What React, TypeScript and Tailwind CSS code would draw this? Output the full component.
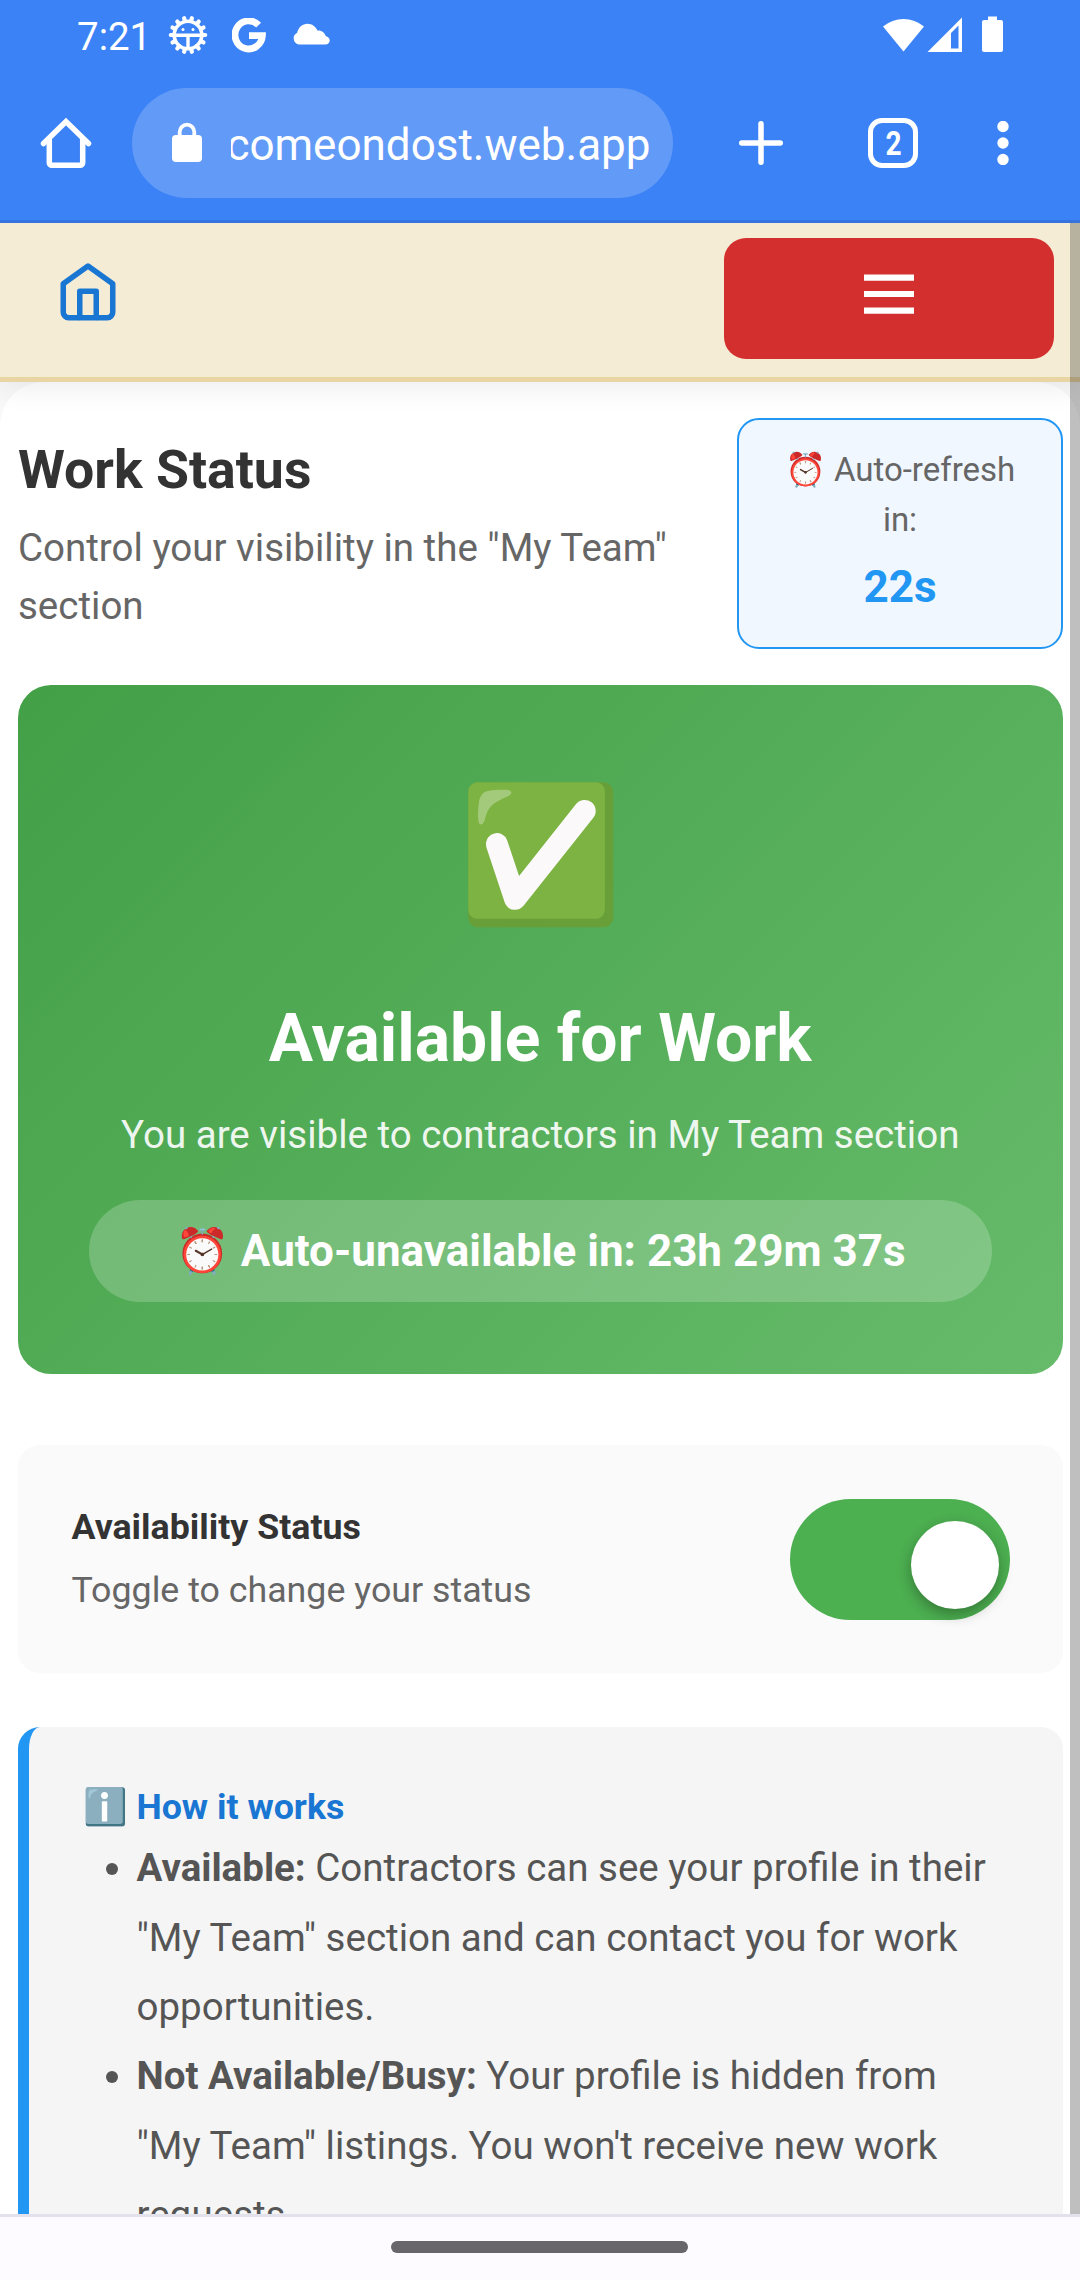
import React from "react";

function BeetleIcon() {
  const teeth = Array.from({ length: 14 }, (_, i) => (i * 360) / 14 + 360 / 28);
  return (
    <svg width="40" height="40" viewBox="0 0 40 40" fill="none" stroke="#fff">
      {teeth.map((a) => (
        <path key={a} d="M20 5.5V2.8" strokeWidth="4.2" strokeLinecap="round" transform={`rotate(${a} 20 20)`} />
      ))}
      <circle cx="20" cy="20" r="13.8" strokeWidth="3.6" />
      <path d="M6 20.2h28M20 20v14" strokeWidth="3.4" />
      <circle cx="15" cy="14.6" r="1.5" fill="#fff" stroke="none" />
      <circle cx="25" cy="14.6" r="1.5" fill="#fff" stroke="none" />
    </svg>
  );
}

function StatusBar() {
  return (
    <div className="flex h-[72px] items-start">
      <span className="ml-[77px] mt-[14px] w-[90px] text-[38.5px] leading-[46px] text-white">7:21</span>
      <div className="mt-[15px] ml-[1px]">
        <BeetleIcon />
      </div>
      <svg className="mt-[18px] ml-[24px]" width="34" height="35" viewBox="0 0 34 35" fill="none" stroke="#fff" strokeWidth="6.8">
        <path d="M26.6 7.2A13.7 14 0 1 0 30.4 17.6H17" />
      </svg>
      <svg className="mt-[23px] ml-[25.5px]" width="38" height="22" viewBox="0 0 38 22" fill="#fff">
        <path d="M6.6 21.5A6.3 6.3 0 0 1 5.2 9.7C6.200 4.500 10.300.700 15.500.700c4.500 0 8.300 2.800 9.900 6.800 4-.5 7.300 2 8.300 5.500 2.500.6 4 2.400 4 4.500 0 2.300-1.700 4-4.200 4z" />
      </svg>
      <svg className="mt-[16px] ml-[553.5px]" width="122" height="38" viewBox="0 0 122 38" fill="#fff">
        <path d="M0 10.500A32 32 0 0 1 41 10.500L20.500 35.500z" />
        <path fillRule="evenodd" d="M44.500 36L79 1.500V36zM68 32.500h7.500V9.500L68 17z" />
        <path d="M105 .5h9v3.500h4a2 2 0 0 1 2 2v28a2 2 0 0 1-2 2h-17a2 2 0 0 1-2-2V6a2 2 0 0 1 2-2h4z" />
      </svg>
    </div>
  );
}

function AddressBar() {
  return (
    <div className="flex h-[148px] items-start pt-4">
      <svg className="ml-[33px] mt-[22px]" width="66" height="66" viewBox="0 0 66 66" fill="none" stroke="#fff" strokeWidth="5.500" strokeLinecap="round" strokeLinejoin="round">
        <path strokeLinejoin="miter" d="M10.500 33.500L33 11.500 55.500 33.500" />
        <path strokeLinecap="butt" d="M16.300 29v23.800a2.500 2.500 0 0 0 2.500 2.500h28.400a2.500 2.500 0 0 0 2.500-2.500V29" />
      </svg>
      <div className="ml-[33px] flex h-[110px] w-[541px] items-start rounded-full bg-[#629af7]">
        <svg className="ml-[40px] mt-[34px]" width="30" height="41" viewBox="0 0 30 41">
          <rect y="13" width="30" height="27" rx="4" fill="#fff" />
          <path d="M7.700 15V10a7.300 7.300 0 0 1 14.600 0v5" fill="none" stroke="#fff" strokeWidth="3.800" />
        </svg>
        <div className="ml-[29px] mt-[27px] flex w-[419.5px] justify-end overflow-hidden whitespace-nowrap text-[44px] leading-[60px] text-white">
          <span>comeondost.web.app</span>
        </div>
      </div>
      <svg className="ml-[66px] mt-[33px]" width="44" height="44" viewBox="0 0 44 44" stroke="#fff" strokeWidth="5.500" strokeLinecap="round">
        <path d="M2.750 22h38.500M22 2.750v38.500" />
      </svg>
      <div className="ml-[85px] mt-[30px] flex h-[50px] w-[50px] items-center justify-center rounded-[14px] border-[5.500px] border-white">
        <span className="scale-x-[0.85] text-[33px] leading-none font-bold text-white">2</span>
      </div>
      <svg className="ml-[79px] mt-[33px]" width="12" height="44" viewBox="0 0 12 44" fill="#fff">
        <circle cx="6" cy="5.500" r="5.700" />
        <circle cx="6" cy="22" r="5.700" />
        <circle cx="6" cy="38.500" r="5.700" />
      </svg>
    </div>
  );
}

function NavBar() {
  return (
    <nav className="relative z-10 flex h-[159px] shrink-0 items-start justify-between border-b-[5px] border-[#e8d5a3] bg-[#f5ecd6] pr-[26px] pl-[55px] pt-[15px] shadow-[0_5.5px_27.5px_rgba(0,0,0,0.08)]">
      <svg className="mt-[21px]" width="66" height="66" viewBox="0 0 66 66" fill="none" stroke="#1976d2" strokeWidth="5.500" strokeLinejoin="round" strokeLinecap="round">
        <path d="M8.250 24.750L33 7l24.750 17.750V53a5.500 5.500 0 0 1-5.500 5.700H13.750A5.500 5.500 0 0 1 8.250 53z" />
        <path d="M24.750 58.500V32.200h16.500v26.300" />
      </svg>
      <button className="flex h-[121px] w-[330px] items-start justify-center rounded-[22px] bg-[#d32f2f] pt-[36px]">
        <svg width="50" height="41" viewBox="0 0 50 41" stroke="#fff" strokeWidth="6.200">
          <path d="M0 3.600h50M0 20h50M0 36.600h50" />
        </svg>
      </button>
    </nav>
  );
}

export default function App() {
  return (
    <div className="relative flex h-[2280px] w-[1080px] flex-col overflow-hidden bg-[#fdfbff] font-['Roboto',sans-serif]">
      <header className="h-[223px] shrink-0 border-b-[3px] border-[#3574df] bg-[#3b82f6]">
        <StatusBar />
        <AddressBar />
      </header>
      <div className="relative flex h-[1991px] shrink-0 flex-col overflow-hidden bg-[#f8f8f8]">
        <NavBar />
        <main className="h-[1900px] shrink-0 rounded-t-[44px] bg-white pr-[17px] pl-[17.5px] pt-[36px]">
          <section className="flex h-[231px] justify-between">
            <div className="w-[680px] pl-[0.5px] pt-[22px]">
              <h1 className="text-[53.6px] leading-[60px] font-bold text-[#333]">Work Status</h1>
              <p className="mt-[19px] text-[38.5px] leading-[57.750px] text-[#666]">Control your visibility in the "My Team" section</p>
            </div>
            <div className="h-[231px] w-[326px] rounded-[22px] border-2 border-[#2196f3] bg-[#f0f7ff] px-[30px] pt-[25px] text-center">
              <div className="text-[33px] leading-[50px] text-[#666]">⏰ Auto-refresh in:</div>
              <div className="mt-[9px] text-[44px] leading-[66px] font-bold text-[#2196f3]">22s</div>
            </div>
          </section>

          <section className="mt-[36px] h-[689px] rounded-[33px] bg-[linear-gradient(135deg,#43a047,#66bb6a)] px-[71px] pt-[71px] text-center text-white">
            <div className="h-[198px] text-[132px] leading-[198px]">✅</div>
            <h2 className="mt-[45px] text-[66px] leading-[80px] font-bold">Available for Work</h2>
            <p className="mt-[27px] text-[38.5px] leading-[58px] opacity-90">You are visible to contractors in My Team section</p>
            <div className="mt-[36px] h-[102px] rounded-full bg-white/20 text-[44px] leading-[102px] font-bold">⏰ Auto-unavailable in: 23h 29m 37s</div>
          </section>

          <section className="mt-[71px] flex h-[228px] items-start justify-between rounded-[22px] bg-[#fafafa] pr-[53px] pl-[54px] pt-[54px]">
            <div>
              <h3 className="mt-[2px] text-[35.75px] leading-[52px] font-bold text-[#333]">Availability Status</h3>
              <p className="mt-[11px] text-[35.75px] leading-[52px] text-[#666]">Toggle to change your status</p>
            </div>
            <div className="flex h-[121px] w-[220px] justify-end rounded-full bg-[#4caf50] pt-[22px] pr-[11px]">
              <div className="h-[88px] w-[88px] rounded-full bg-white shadow-[0_5.5px_14px_rgba(0,0,0,0.3)]" />
            </div>
          </section>

          <section className="mt-[54px] h-[600px] rounded-[22px] border-l-[11px] border-[#2196f3] bg-[#f5f5f5] pt-[54px] pr-[54px] pl-[54px]">
            <h3 className="text-[35.75px] leading-[52px] font-bold text-[#1976d2]">ℹ️ How it works</h3>
            <ul className="list-disc pt-[0.4px] pl-[54px] text-[38.5px] leading-[69.3px] text-[#555]">
              <li><strong className="font-bold">Available:</strong> Contractors can see your profile in their "My Team" section and can contact you for work opportunities.</li>
              <li><strong className="font-bold">Not Available/Busy:</strong> Your profile is hidden from "My Team" listings. You won't receive new work requests.</li>
            </ul>
          </section>
        </main>
        <div className="absolute top-0 right-0 z-20 h-full w-[10px] bg-black/25" />
      </div>
      <footer className="flex h-[66px] shrink-0 justify-center border-t-[3px] border-[#e3e1ec] bg-[#fdfbff] pt-[24px] pr-[2px]">
        <div className="h-[12px] w-[297px] rounded-full bg-[#68666a]" />
      </footer>
    </div>
  );
}
